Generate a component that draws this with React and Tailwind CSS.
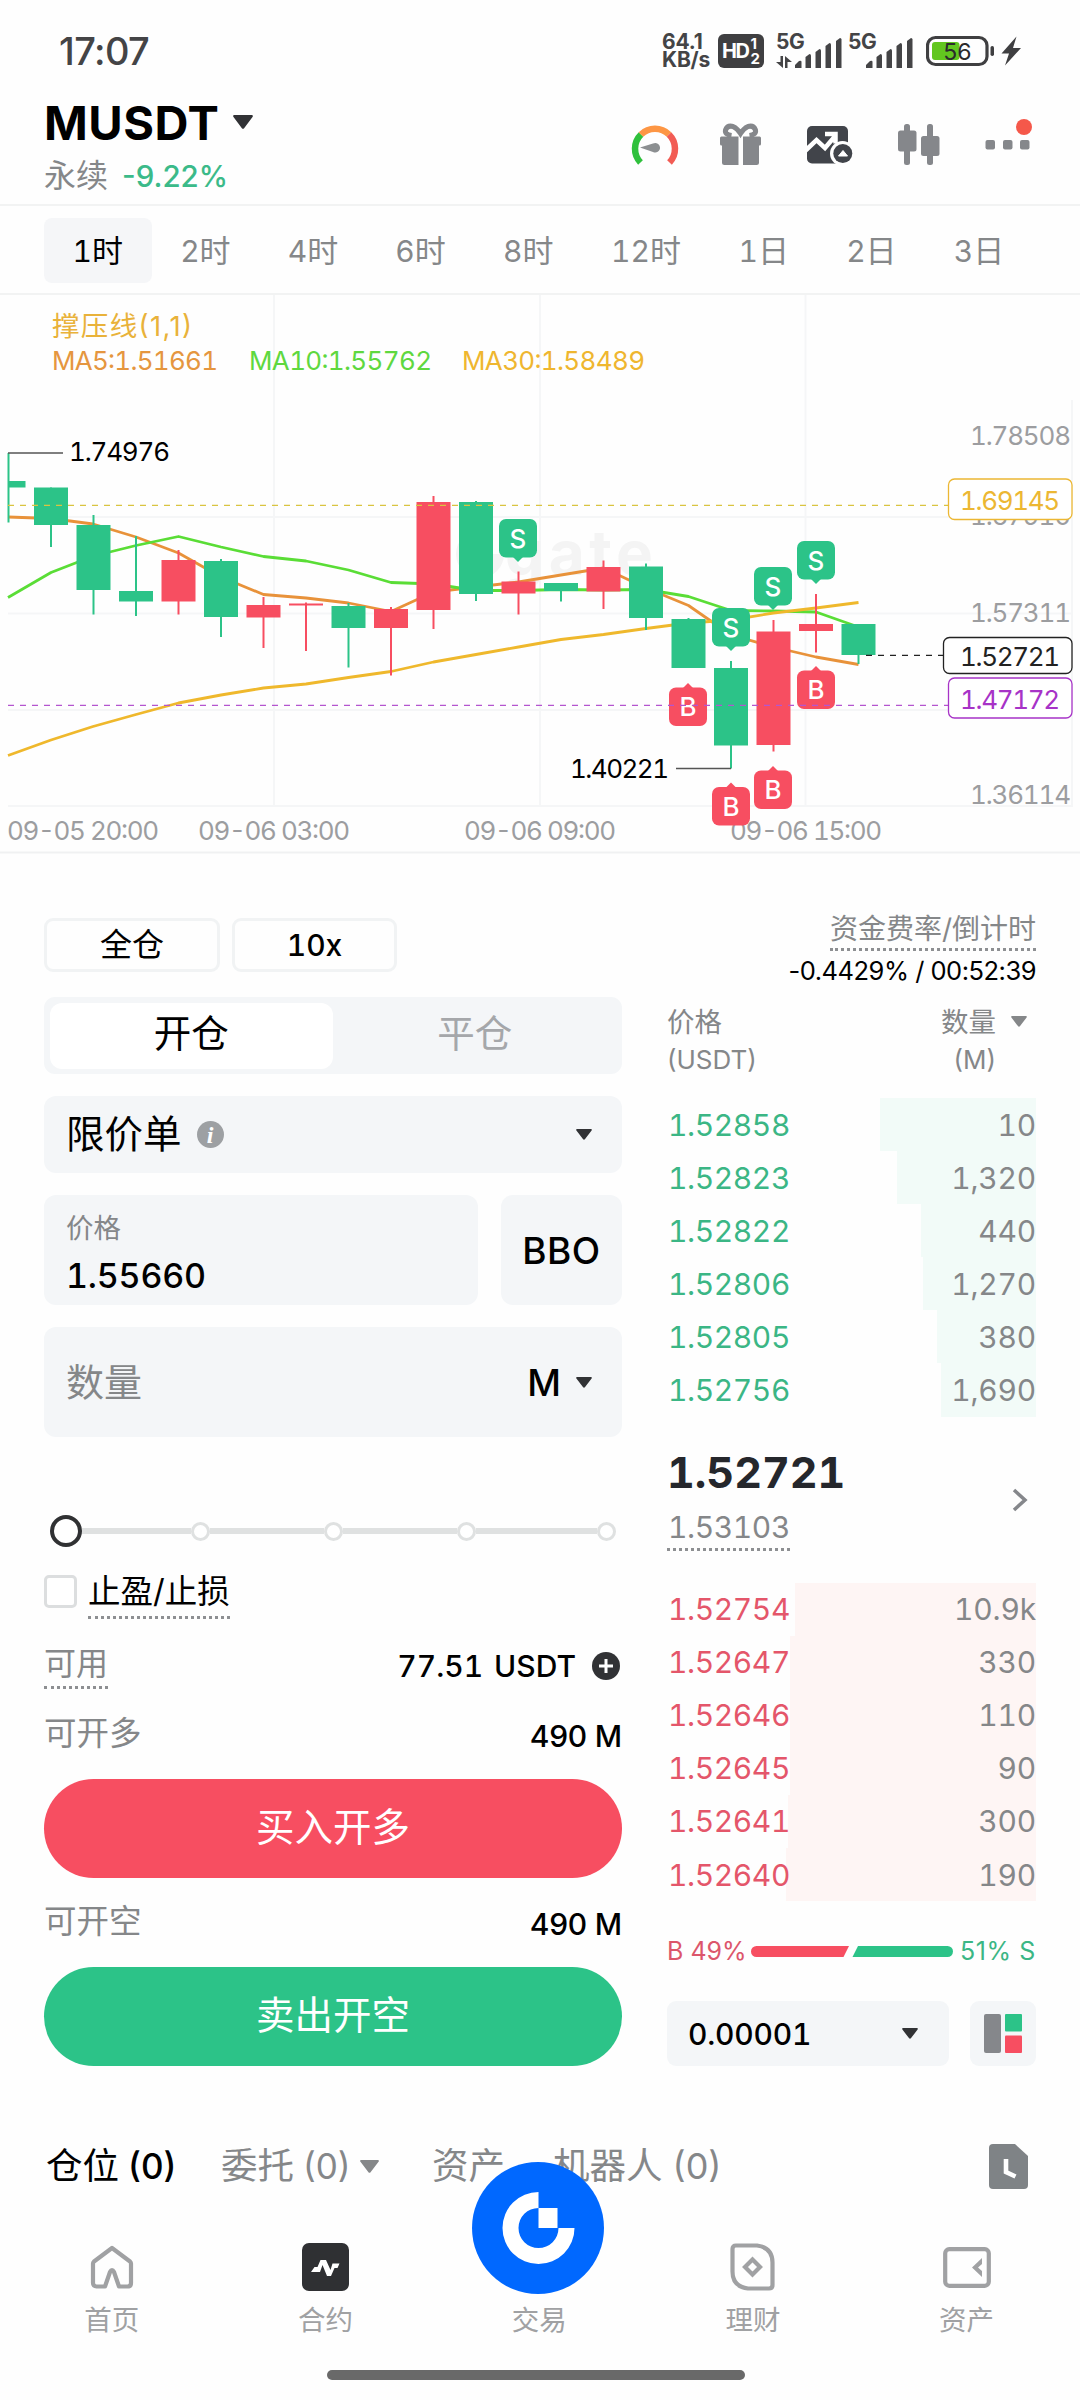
import { useState } from 'react';

const GREEN = '#2cc388';
const RED = '#f74e61';

const periods = ['1时', '2时', '4时', '6时', '8时', '12时', '1日', '2日', '3日'];

// [body top, body bottom, high, low, up?]
const candles = [
  [481, 487.5, 453, 522.5, false],
  [487.5, 525, 487.5, 547, false],
  [525, 590, 515, 614.5, false],
  [591, 601.5, 536, 616, false],
  [560, 601.5, 550, 614.5, true],
  [561, 617, 559, 637, false],
  [605, 617.5, 597, 648, true],
  [603.5, 605.5, 602.5, 651, true],
  [606, 628, 603, 667.5, false],
  [609, 628, 607, 675.5, true],
  [502, 610, 496, 629, true],
  [502, 594, 501, 601, false],
  [581.5, 593.5, 571.5, 614.5, true],
  [583, 591, 583, 601.5, false],
  [567, 591.5, 560.5, 609, true],
  [566.5, 618, 563.5, 630, false],
  [619, 668, 618, 668, false],
  [668, 745.5, 661, 768.5, false],
  [631.5, 745, 620, 751.5, true],
  [624, 631, 594, 652.5, true],
  [624, 655, 624, 664, false],
];

const ma5 = '8,517 51,518.5 93,524 136,537 178.5,553 221,577 263.5,594.5 306,598 348.5,603 391,611.5 433.5,592 476,587 518.5,582 561,575 603.5,568 646,588 688.5,605.5 731,635 773.5,647 816,657 858.5,664.5';
const ma10 = '8,597.5 51,572.5 93.5,556 136,545.5 178.5,536.5 221,547 263.5,556.5 306,561 348.5,570 391,582.5 433.5,584 476,590.5 518.5,590.5 561,589.5 603.5,590 646,589.5 688.5,596.5 731,610.5 773.5,611 816,612 858.5,627';
const ma30 = '8,755.5 51,740 93,726.5 136,714.5 178.5,703 221,695 263.5,688 306,684 348.5,677.5 391,671.5 433.5,662 476,654.5 518.5,647 561,639.5 603.5,634.5 646,628.5 688.5,623 731,620 773.5,613 816,608 858.5,602.5';

const markers = [
  ['S', 518, 519],
  ['S', 731, 608],
  ['S', 773, 567],
  ['S', 816, 541],
  ['B', 688, 687.5],
  ['B', 731, 787],
  ['B', 773, 770.5],
  ['B', 816, 670.5],
];

const asks = [
  ['1.52858', '10', 156],
  ['1.52823', '1,320', 139],
  ['1.52822', '440', 115],
  ['1.52806', '1,270', 113],
  ['1.52805', '380', 99],
  ['1.52756', '1,690', 95],
];

const bids = [
  ['1.52754', '10.9k', 241],
  ['1.52647', '330', 246],
  ['1.52646', '110', 246],
  ['1.52645', '90', 246],
  ['1.52641', '300', 248],
  ['1.52640', '190', 250],
];

function Caret({ className }) {
  return (
    <svg viewBox="0 0 20 14" preserveAspectRatio="none" className={className} fill="currentColor">
      <path d="M1.5 0h17c1.3 0 1.8 1 1 2l-8.4 11.2c-.6.8-1.6.8-2.2 0L.5 2C-.3 1 .2 0 1.5 0z" />
    </svg>
  );
}

function SignalBars() {
  return (
    <svg width="48" height="32" viewBox="0 0 48 32" fill="#444446">
      <path d="M0 31v-3l4-4q2.500-1 2.500 1v6z" />
      <path d="M10.500 31V20l4-3q1.500 0 1.500 1.500V31z" />
      <path d="M20.500 31V15l4-3q1.500 0 1.500 1.500V31z" />
      <path d="M30.500 31V9l4-3q1.500 0 1.500 1.500V31z" />
      <path d="M41 31V4l4-3q1.500 0 1.500 1.500V31z" />
    </svg>
  );
}

function StatusBar() {
  return (
    <div className="flex h-[96px] justify-between pl-[59px] pr-[57px] pt-[32px] text-[#444446]">
      <span className="h-[38px] text-[38px] font-[450] leading-[38px] tracking-[-0.600px]">17:07</span>
      <div className="flex h-[38px]">
        <div className="mr-[7px] w-[49px] pt-[1px] text-[21px] font-bold leading-[18px] tracking-[-0.2px]">
          <div>64.1</div>
          <div>KB/s</div>
        </div>
        <div className="mt-[2px] flex h-[34px] w-[46px] items-center rounded-[6px] bg-[#3f3f41] pl-[4px] font-bold text-white">
          <span className="text-[20px] leading-none tracking-[-1.500px]">HD</span>
          <span className="ml-[2px] flex flex-col text-[15px] leading-[15px]">
            <span>1</span>
            <span>2</span>
          </span>
        </div>
        <div className="relative ml-[12px] w-[69px] pt-[1px]">
          <div className="text-[21px] font-bold leading-[18px] tracking-[-0.500px]">5G</div>
          <svg className="absolute left-0 top-[24px]" width="16" height="12" viewBox="0 0 16 12" fill="#444446">
            <path d="M4.500 0H7v12L0 6h4.500zM9 12h2.500V6H16L9 0z" />
          </svg>
          <div className="absolute left-[19px] top-[5px]"><SignalBars /></div>
        </div>
        <div className="relative w-[81px] pl-[3px] pt-[1px]">
          <div className="text-[21px] font-bold leading-[18px] tracking-[-0.500px]">5G</div>
          <div className="absolute left-[21px] top-[5px]"><SignalBars /></div>
        </div>
        <svg width="97" height="38" viewBox="0 0 97 38">
          <rect x="1.500" y="5.500" width="59.500" height="27" rx="8" fill="none" stroke="#3f3f41" strokeWidth="3.200" />
          <rect x="6" y="10" width="27.500" height="18" rx="3" fill="#62c61f" />
          <rect x="64.500" y="14" width="3.500" height="10" rx="1.700" fill="#3f3f41" />
          <path d="M90.500 4.500 75.500 21.500h7.500L79 33.500 95 16h-8z" fill="#3f3f41" />
          <text x="31.300" y="27.500" textAnchor="middle" fontSize="23" fill="#2b2b2b">56</text>
        </svg>
      </div>
    </div>
  );
}

function Header() {
  return (
    <div className="flex h-[110px] justify-between border-b-2 border-[#f2f3f3] pl-[44px] pr-[44px]">
      <div>
        <div className="mt-[3px] flex h-[48px] items-center">
          <h1 className="mt-[-2px] text-[47px] font-bold leading-none tracking-[0.500px] text-black">MUSDT</h1>
          <Caret className="ml-[14px] mt-[-2px] h-[14px] w-[20px] text-[#313235]" />
        </div>
        <div className="mt-[11px] flex h-[36px] items-center text-[32px] leading-none">
          <span className="text-[#858789]">永续</span>
          <span className="ml-[14px] mt-[2px] text-[29.500px] font-medium text-[#3bba89]">-9.22%</span>
        </div>
      </div>
      <svg width="408" height="100" viewBox="628 96 408 100">
        {/* sentiment gauge */}
        <g fill="none" strokeWidth="6.500">
          <path d="M640.500 162.500a20 20 0 0 1 0.500-28" stroke="#2fc03c" />
          <path d="M641 134.500a20 20 0 0 1 28 0" stroke="#fd9644" />
          <path d="M669 134.500a20 20 0 0 1 0.500 28" stroke="#f25c54" />
        </g>
        <path d="M640 147.500 653 143.500a4.800 4.800 0 1 1 0 8.500z" fill="#8c8f91" />
        <g transform="translate(0 -5.500)" fill="#85878b">
          <path d="M721.500 142h17v28.500H724.500q-2.500 0-2.500-2.500V151h-.5q-1.500 0-1.500-1.500V143.500q0-1.500 1.500-1.500zM743 142h16.500q1.500 0 1.500 1.500v6q0 1.500-1.500 1.500H759V168q0 2.500-2.500 2.500H743z" />
          <path d="M731.500 141q-7-1-6-5.500 2-5 7.500-3.500 4.500 2 7.500 7 3-5 7.500-7 5.500-1.500 7.500 3.500 1 4.500-6 5.500" fill="none" stroke="#85878b" strokeWidth="5" />
        </g>
        <g transform="translate(0 -4.500)">
          <rect x="807" y="130.500" width="41" height="37.500" rx="5" fill="#41444a" />
          <path d="M805 155.500 816.500 144.500l8.500 8 11-13M825 138.500h10.500V148" fill="none" stroke="#fff" strokeWidth="4.500" />
          <circle cx="842.500" cy="158" r="12.500" fill="#fefefe" />
          <circle cx="842.800" cy="158" r="9.500" fill="#41444a" />
          <path d="M838.500 160.500 843 155l4.500 5.500z" fill="#fff" stroke="#fff" strokeWidth="1" />
        </g>
        <g fill="#85878b">
          <rect x="904" y="124" width="6" height="41" rx="2.500" />
          <rect x="898" y="130.500" width="18.500" height="21" rx="2.500" />
          <rect x="927" y="124" width="6" height="41" rx="2.500" />
          <rect x="921" y="136" width="18.500" height="20" rx="2.500" />
          <rect x="985.500" y="140" width="9.500" height="9.500" rx="2" />
          <rect x="1003" y="140" width="9.500" height="9.500" rx="2" />
          <rect x="1020" y="140" width="9.500" height="9.500" rx="2" />
        </g>
        <circle cx="1024" cy="127" r="8" fill="#f5584a" />
      </svg>
    </div>
  );
}

function PeriodTabs() {
  const [active, setActive] = useState('1时');

  return (
    <div className="flex h-[89px] items-center border-b-2 border-[#f2f3f3] pl-[44px] pt-[2px]">
      {periods.map((p) => (
        <button
          key={p}
          onClick={() => setActive(p)}
          className={`flex h-[65px] items-center justify-center rounded-[8px] text-[31px] leading-none ${p === '12时' ? 'w-[128px]' : 'w-[107.600px]'} ${p === active ? 'bg-[#f5f6f8] text-black' : 'text-[#858789]'}`}
        >
          <span className="pt-[1px] text-[30px] tabular-nums">{p.slice(0, -1)}</span>
          {p.slice(-1)}
        </button>
      ))}
    </div>
  );
}

function Marker({ type, x, y }) {
  const sell = type === 'S';
  return (
    <g fill={sell ? GREEN : RED}>
      <rect x={x - 19} y={y} width="38" height="38.500" rx="7" />
      {sell
        ? <path d={`M${x - 5} ${y + 38}l5 5 5-5z`} />
        : <path d={`M${x - 5} ${y + 0.5}l5-5 5 5z`} />}
      <text x={x} y={y + 28.500} textAnchor="middle" fontSize="26" fontWeight="500" fill="#fff">{type}</text>
    </g>
  );
}

function PriceTag({ x, y, h, color, value }) {
  return (
    <g>
      <rect x={x} y={y} width={1072 - x} height={h} rx="6" fill="#fff" stroke={color} strokeWidth="1.300" />
      <text x="960" y={y + h / 2 + 10.500} textLength="100" fontSize="26" fill={color}>{value}</text>
    </g>
  );
}

function Chart() {
  return (
    <svg width="1080" height="559" viewBox="0 295 1080 559" className="block tabular-nums">
      <g stroke="#f5f6f7" strokeWidth="2">
        <path d="M274 295v512M540 295v512M805.500 295v512M1072 400v407" />
        <path d="M8 517h1064M8 613.500h1064M8 710h1064M8 806h1064" />
      </g>
      <path d="M0 852.500h1080" stroke="#f0f1f2" strokeWidth="2" />

      <g fill="#f4f4f4">
        <path d="M480 530a24 24 0 1 0 24 24h-12a12 12 0 1 1-12-12zM480 542h12v12h-12z" />
        <text x="505" y="575" textLength="148" fontSize="62" fontWeight="700">gate</text>
      </g>

      <text x="52" y="335.500" fontSize="27.500" textLength="140" fill="#e9b23a" className="proportional-nums">撑压线(1,1)</text>
      <text x="52" y="370" fontSize="26" textLength="166" fill="#e5963f">MA5:1.51661</text>
      <text x="249" y="370" fontSize="26" textLength="183" fill="#5fd83f">MA10:1.55762</text>
      <text x="462" y="370" fontSize="26" textLength="183" fill="#efb62f">MA30:1.58489</text>

      <g fontSize="26" fill="#9c9da0">
        <text x="970" y="444.500" textLength="101">1.78508</text>
        <text x="970" y="524.500" textLength="101">1.67910</text>
        <text x="970" y="622" textLength="101">1.57311</text>
        <text x="970" y="803.500" textLength="101">1.36114</text>
        <text x="7" y="840" textLength="152">09-05 20:00</text>
        <text x="198" y="840" textLength="152">09-06 03:00</text>
        <text x="464" y="840" textLength="152">09-06 09:00</text>
        <text x="730" y="840" textLength="152">09-06 15:00</text>
      </g>

      <g fill="none" strokeWidth="2.800" strokeLinejoin="round">
        <polyline points={ma5} stroke="#e8923a" />
        <polyline points={ma10} stroke="#5add36" />
        <polyline points={ma30} stroke="#efb82c" />
      </g>

      {candles.map(([top, bottom, high, low, up], i) => {
        const x = 8.5 + i * 42.5;
        const left = Math.max(x - 17, 8);
        return (
          <g key={i} fill={up ? RED : GREEN}>
            <rect x={x - 1} y={high} width="2" height={low - high} />
            <rect x={left} y={top} width={x + 17 - left} height={bottom - top} />
          </g>
        );
      })}

      <path d="M8 453h55M676 768.500h55" stroke="#555" strokeWidth="1.500" />
      <text x="69" y="461" fontSize="26" textLength="101" fill="#000">1.74976</text>
      <text x="570" y="778" fontSize="26" textLength="99" fill="#000">1.40221</text>

      {markers.map(([type, x, y]) => <Marker key={x + type} type={type} x={x} y={y} />)}

      <g strokeDasharray="6 6" strokeWidth="1.300">
        <path d="M8 505.300h940" stroke="#d9c440" />
        <path d="M8 705.300h940" stroke="#b455cf" />
        <path d="M866 655.300h77" stroke="#222" />
      </g>
      <PriceTag x={948.5} y={479} h={40.5} color="#ecb733" value="1.69145" />
      <PriceTag x={943.5} y={637.500} h={36} color="#222222" value="1.52721" />
      <PriceTag x={948.5} y={678} h={40} color="#a733c7" value="1.47172" />
    </svg>
  );
}

function Slider() {
  return (
    <div className="mt-[76px] flex h-[36px] items-center justify-between pl-[6px] pr-[7px]">
      <span className="size-[32px] shrink-0 rounded-full border-4 border-[#303133] bg-white" />
      {[109, 114, 114, 121].map((w, i) => (
        <span key={i} className="flex items-center">
          <span className="h-[6px] bg-[#dfe1e1]" style={{ width: w }} />
          <span className="size-[19px] rounded-full border-[3px] border-[#dfe1e1] bg-white" />
        </span>
      ))}
    </div>
  );
}

function OrderForm() {
  const [side, setSide] = useState('open');
  const [stop, setStop] = useState(false);

  return (
    <div className="w-[578px]">
      <div className="flex gap-[12px]">
        <button className="h-[54px] w-[176px] rounded-[9px] border-[3px] border-[#f1f3f4] text-[32px] leading-none">全仓</button>
        <button className="h-[54px] w-[165px] rounded-[9px] border-[3px] border-[#f1f3f4] text-[30px] font-[450] leading-none tabular-nums">10x</button>
      </div>

      <div className="mt-[25px] flex h-[77px] rounded-[11px] bg-[#f4f6f8] p-[5.500px] text-[37.500px] leading-none">
        <button onClick={() => setSide('open')} className={`flex-1 rounded-[12px] pb-[3px] ${side === 'open' ? 'bg-white text-black' : 'text-[#a5a7aa]'}`}>开仓</button>
        <button onClick={() => setSide('close')} className={`flex-1 rounded-[12px] pb-[3px] ${side === 'close' ? 'bg-white text-black' : 'text-[#a5a7aa]'}`}>平仓</button>
      </div>

      <div className="mt-[22px] flex h-[77px] items-center rounded-[12px] bg-[#f4f6f8] pl-[22px] pr-[30px]">
        <span className="text-[38.500px] leading-none">限价单</span>
        <span className="ml-[15px] flex size-[27px] items-center justify-center rounded-full bg-[#9da0a3] font-['Liberation_Serif'] text-[24px] font-bold italic leading-none text-white">i</span>
        <Caret className="ml-auto h-[11px] w-[16px] text-[#313235]" />
      </div>

      <div className="mt-[22px] flex gap-[23px]">
        <div className="h-[110px] w-[434px] rounded-[12px] bg-[#f4f6f8] pl-[22px] pt-[19px]">
          <div className="text-[27.500px] leading-[28px] text-[#858789]">价格</div>
          <div className="mt-[17px] text-[34px] font-medium leading-[34px] tracking-[-0.200px] tabular-nums">1.55660</div>
        </div>
        <button className="h-[110px] flex-1 rounded-[12px] bg-[#f4f6f8] text-[37px] font-medium leading-none tracking-[0.500px]">BBO</button>
      </div>

      <div className="mt-[22px] flex h-[110px] items-center rounded-[12px] bg-[#f4f6f8] pl-[22px] pr-[30px]">
        <span className="text-[38px] leading-none text-[#858789]">数量</span>
        <span className="ml-auto text-[37px] font-medium leading-none">M</span>
        <Caret className="ml-[15px] h-[11px] w-[16px] text-[#313235]" />
      </div>

      <Slider />

      <div className="mt-[26px] flex">
        <button onClick={() => setStop(!stop)} className={`size-[33px] rounded-[5px] border-[3px] border-[#dcdedf] ${stop ? 'bg-black' : 'bg-white'}`} />
        <span className="ml-[11px] h-[44px] border-b-[3px] border-dotted border-[#8d8f92] text-[32.500px] leading-[34px]">止盈/止损</span>
      </div>

      <div className="mt-[27px] flex h-[43px] justify-between">
        <span className="h-[43px] border-b-[3px] border-dotted border-[#8d8f92] text-[32px] leading-[36px] text-[#858789]">可用</span>
        <span className="flex h-[39px] items-center text-[30px] font-[450] leading-none">
          <span className="tabular-nums">77.51</span>
          <span className="ml-[11px]">USDT</span>
          <svg className="ml-[16px] mr-[2px]" width="28" height="28" viewBox="0 0 28 28">
            <circle cx="14" cy="14" r="14" fill="#313235" />
            <path d="M14 7v14M7 14h14" stroke="#fff" strokeWidth="3" />
          </svg>
        </span>
      </div>

      <div className="mt-[26px] flex h-[38px] items-center justify-between leading-none">
        <span className="text-[32.500px] text-[#858789]">可开多</span>
        <span className="pt-[3px] text-[30px] font-medium tracking-[-0.200px]">490 M</span>
      </div>
      <button className="mt-[26px] h-[99px] w-full rounded-full bg-[#f74e61] pb-[3px] text-[38.500px] leading-none text-white">买入开多</button>

      <div className="mt-[25px] flex h-[38px] items-center justify-between leading-none">
        <span className="text-[32.500px] text-[#858789]">可开空</span>
        <span className="pt-[3px] text-[30px] font-medium tracking-[-0.200px]">490 M</span>
      </div>
      <button className="mt-[26px] h-[99px] w-full rounded-full bg-[#2cc388] pb-[3px] text-[38.500px] leading-none text-white">卖出开空</button>
    </div>
  );
}

function BookRow({ price, amount, depth, side }) {
  return (
    <div className="relative flex h-[53.100px] items-center justify-between text-[30px] leading-none tabular-nums">
      <div
        className={`absolute inset-y-0 right-0 ${side === 'ask' ? 'bg-[#f2fbf8]' : 'bg-[#fef5f4]'}`}
        style={{ width: depth }}
      />
      <span className={`relative pl-[1px] tracking-[-0.400px] ${side === 'ask' ? 'text-[#3bb685]' : 'text-[#e4566a]'}`}>{price}</span>
      <span className="relative tracking-[-0.200px] text-[#858789]">{amount}</span>
    </div>
  );
}

function OrderBook() {
  return (
    <div className="w-[369px]">
      <div className="flex flex-col items-end">
        <span className="mt-[-7px] h-[40px] border-b-[3px] border-dotted border-[#8d8f92] text-[28px] leading-[36px] text-[#858789]">资金费率/倒计时</span>
        <span className="mt-[6px] text-[25.500px] leading-[28px] tracking-[-0.500px]">-0.4429% / 00:52:39</span>
      </div>

      <div className="mt-[18px] flex justify-between text-[27.500px] leading-[38px] text-[#858789]">
        <div>
          <div>价格</div>
          <div className="text-[26px]">(USDT)</div>
        </div>
        <div className="flex pr-[9px]">
          <div className="text-right">
            <div>数量</div>
            <div className="text-[26px]">(M)</div>
          </div>
          <Caret className="ml-[15px] mt-[13px] h-[11px] w-[16px]" />
        </div>
      </div>

      <div className="mt-[19px]">
        {asks.map(([price, amount, depth]) => (
          <BookRow key={price} price={price} amount={amount} depth={depth} side="ask" />
        ))}
      </div>

      <div className="mt-[32px] flex h-[134px] justify-between">
        <div>
          <div className="pt-[2px] text-[43px] font-bold leading-[42px] tabular-nums text-[#25272c]">1.52721</div>
          <div className="mt-[19px] inline-block h-[39px] border-b-[3px] border-dotted border-[#8d8f92] pl-[1px] text-[30px] leading-[30px] tracking-[-0.400px] tabular-nums text-[#858789]">1.53103</div>
        </div>
        <svg className="mr-[8px] mt-[39px]" width="16" height="24" viewBox="0 0 16 24" fill="none" stroke="#85878b" strokeWidth="3.500">
          <path d="M2 2l11 10L2 22" />
        </svg>
      </div>

      <div>
        {bids.map(([price, amount, depth]) => (
          <BookRow key={price} price={price} amount={amount} depth={depth} side="bid" />
        ))}
      </div>

      <div className="mt-[35px] flex h-[30px] items-center justify-between text-[25px] leading-none">
        <span className="text-[#dc566b]">B 49%</span>
        <svg className="mr-[3px]" width="202" height="11" viewBox="0 0 202 11">
          <path d="M5.500 0H98l-5.500 11H5.500a5.500 5.500 0 0 1 0-11z" fill={RED} />
          <path d="M107 0h89.500a5.500 5.500 0 0 1 0 11H101.500z" fill={GREEN} />
        </svg>
        <span className="tracking-[0.600px] text-[#3bb685]">51% S</span>
      </div>

      <div className="mt-[35px] flex justify-between">
        <button className="flex h-[65px] w-[282px] items-center justify-between rounded-[9px] bg-[#f4f6f8] pl-[21px] pr-[31px] text-[30px] font-medium leading-none tracking-[-0.200px] tabular-nums">
          0.00001
          <Caret className="h-[11px] w-[16px] text-[#313235]" />
        </button>
        <button className="flex h-[65px] w-[66px] items-center justify-center rounded-[9px] bg-[#f4f6f8]">
          <svg width="38" height="39" viewBox="0 0 38 39">
            <rect width="17" height="39" rx="2" fill="#85878b" />
            <rect x="21" width="17" height="17.500" rx="1" fill={GREEN} />
            <rect x="21" y="21.500" width="17" height="17.500" rx="1" fill={RED} />
          </svg>
        </button>
      </div>
    </div>
  );
}

function PositionTabs() {
  return (
    <div className="mt-[80px] flex h-[40px] items-center pl-[46px] pr-[52px] text-[36.500px] leading-none text-[#858789]">
      <span className="w-[175px] text-black">仓位<span className="ml-[9px] text-[35px] font-medium">(0)</span></span>
      <span className="flex w-[211px] items-center">委托<span className="ml-[9px] text-[35px]">(0)</span><Caret className="ml-[9px] h-[13px] w-[19px]" /></span>
      <span className="w-[121px]">资产</span>
      <span>机器人<span className="ml-[10px] text-[36px]">(0)</span></span>
      <svg className="ml-auto" width="39" height="45" viewBox="0 0 39 45">
        <path d="M4 0h22l13 12v29q0 4-4 4H4q-4 0-4-4V4q0-4 4-4z" fill="#7f8386" />
        <path d="M17 15v13l9.500 4.500" fill="none" stroke="#fff" strokeWidth="4.600" />
      </svg>
    </div>
  );
}

function NavItem({ label, children }) {
  return (
    <div className="flex w-[213.700px] flex-col items-center">
      <div className="flex h-[50px] items-center justify-center">{children}</div>
      <span className="mt-[13px] text-[27.500px] leading-[30px] text-[#a0a1a3]">{label}</span>
    </div>
  );
}

function BottomNav() {
  return (
    <div className="mt-[56px] flex pl-[5px]">
      <NavItem label="首页">
        <svg width="44" height="44" viewBox="0 0 44 44" fill="none" stroke="#a0a1a3" strokeWidth="4.200" strokeLinejoin="round">
          <path d="M4 16.500 22 3l18 13.500q1 1 1 2V38q0 3.500-3.500 3.500H29L24 27q-2-4-4 0l-5 14.500H6.500Q3 41.500 3 38V18.500q0-1 1-2z" />
        </svg>
      </NavItem>
      <NavItem label="合约">
        <svg width="47" height="48" viewBox="0 0 47 48">
          <rect width="47" height="48" rx="7" fill="#2f3033" />
          <path d="M9 29l3.500-5h3L18.500 17H24l4.500 10 2-6.500h7L35.500 25h-3l-3.500 8H25L20.500 22 18 29z" fill="#fff" />
        </svg>
      </NavItem>
      <NavItem label="交易">
        <div className="relative h-[48px] w-[132px]">
          <svg className="absolute left-[-1px] top-[-81px]" width="132" height="132" viewBox="473 2163 132 132">
            <circle cx="539" cy="2229" r="66" fill="#0068ff" />
            <path d="M539.500 2193a36 36 0 1 0 36 36h-16a20 20 0 1 1-20-20z" fill="#fff" />
            <path d="M539.500 2209h19v20h-19z" fill="#fff" />
          </svg>
        </div>
      </NavItem>
      <NavItem label="理财">
        <svg width="45" height="48" viewBox="0 0 45 48" fill="none" stroke="#a0a1a3" strokeWidth="4.200">
          <path d="M6 2.500h21q15.500 2 15.500 17V42q0 3.500-3.500 3.500H18q-15.500-2-15.500-17V6q0-3.500 3.500-3.500z" />
          <path d="M22.500 16.500 30 24l-7.500 7.500L15 24z" />
        </svg>
      </NavItem>
      <NavItem label="资产">
        <svg width="48" height="41" viewBox="0 0 48 41">
          <rect x="2.200" y="2.200" width="43.600" height="36.600" rx="4" fill="none" stroke="#a0a1a3" strokeWidth="4.200" />
          <path d="M39 11v6l-4 3.500 4 3.500v6l-10-9.500z" fill="#a0a1a3" />
        </svg>
      </NavItem>
    </div>
  );
}

export default function App() {
  return (
    <main className="h-[2400px] w-[1080px] overflow-hidden bg-[#fefefe] font-['Inter','Noto_Sans_CJK_SC',sans-serif] text-black">
      <StatusBar />
      <Header />
      <PeriodTabs />
      <Chart />
      <div className="flex justify-between pl-[44px] pr-[44px] pt-[64px]">
        <OrderForm />
        <OrderBook />
      </div>
      <PositionTabs />
      <BottomNav />
      <div className="ml-[327px] mt-[35px] h-[10px] w-[418px] rounded-full bg-[#696969]" />
    </main>
  );
}
